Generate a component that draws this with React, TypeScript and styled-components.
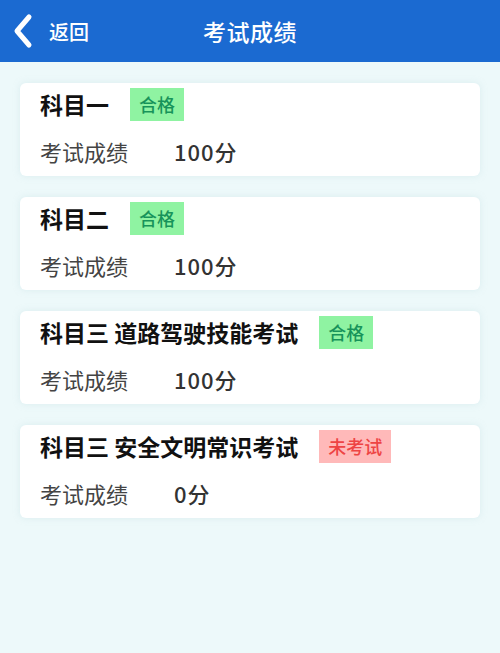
import React from 'react'
import styled, {createGlobalStyle} from 'styled-components'

const GlobalStyle = createGlobalStyle`
    html, body {
        margin: 0;
        padding: 0;
        background: #edf9fa;
        font-family: 'Noto Sans CJK SC', 'Noto Sans', sans-serif;
    }
`

const Page = styled.div`
    min-height: 653px;
    background: #edf9fa;
`

const Header = styled.header`
    position: relative;
    height: 62px;
    background: #1b6ad1;
    display: flex;
    align-items: center;
    justify-content: center;
    color: #ffffff;
`

const BackButton = styled.div`
    position: absolute;
    left: 12px;
    top: 0;
    height: 62px;
    display: flex;
    align-items: center;
    gap: 15px;
    font-size: 20px;
    font-weight: 500;
`

const Title = styled.h1`
    margin: 0;
    font-size: 23px;
    font-weight: 500;
    letter-spacing: 0.5px;
`

const List = styled.main`
    display: flex;
    flex-direction: column;
    gap: 21px;
    padding: 21px 20px;
`

const Card = styled.section`
    background: #ffffff;
    border-radius: 6px;
    box-shadow: 0 0 6px rgba(200, 225, 230, 0.5);
    padding: 4px 20px 8px 20px;
    height: 81px;
`

const TitleRow = styled.div`
    display: flex;
    align-items: center;
    height: 34px;
`

const Subject = styled.span`
    font-size: 23px;
    font-weight: 700;
    color: #111111;
`

const Badge = styled.span<{$pass: boolean}>`
    margin-left: 21px;
    height: 33px;
    padding: 0 9px;
    display: inline-flex;
    align-items: center;
    font-size: 18px;
    font-weight: 500;
    background: ${(p) => (p.$pass ? '#8ff3a2' : '#ffb9b9')};
    color: ${(p) => (p.$pass ? '#17935a' : '#ee4444')};
`

const ScoreRow = styled.div`
    display: flex;
    align-items: center;
    height: 34px;
    margin-top: 13px;
    font-size: 22px;
    color: #444444;
`

const Label = styled.span`
    width: 134px;
`

const Value = styled.span`
    font-weight: 500;
    color: #333333;
    letter-spacing: 1px;
`

const exams = [
    {name: '科目一', status: '合格', pass: true, score: '100分'},
    {name: '科目二', status: '合格', pass: true, score: '100分'},
    {name: '科目三 道路驾驶技能考试', status: '合格', pass: true, score: '100分'},
    {name: '科目三 安全文明常识考试', status: '未考试', pass: false, score: '0分'},
]

const App: React.FC = () => {
    return (
        <Page>
            <GlobalStyle />
            <Header>
                <BackButton>
                    <svg width="22" height="36" viewBox="0 0 22 36">
                        <path d="M17 4 L5 18 L17 32" fill="none" stroke="#ffffff" strokeWidth="5" strokeLinecap="round" strokeLinejoin="round" />
                    </svg>
                    <span>返回</span>
                </BackButton>
                <Title>考试成绩</Title>
            </Header>
            <List>
                {exams.map((exam) => (
                    <Card key={exam.name}>
                        <TitleRow>
                            <Subject>{exam.name}</Subject>
                            <Badge $pass={exam.pass}>{exam.status}</Badge>
                        </TitleRow>
                        <ScoreRow>
                            <Label>考试成绩</Label>
                            <Value>{exam.score}</Value>
                        </ScoreRow>
                    </Card>
                ))}
            </List>
        </Page>
    )
}

export default App
